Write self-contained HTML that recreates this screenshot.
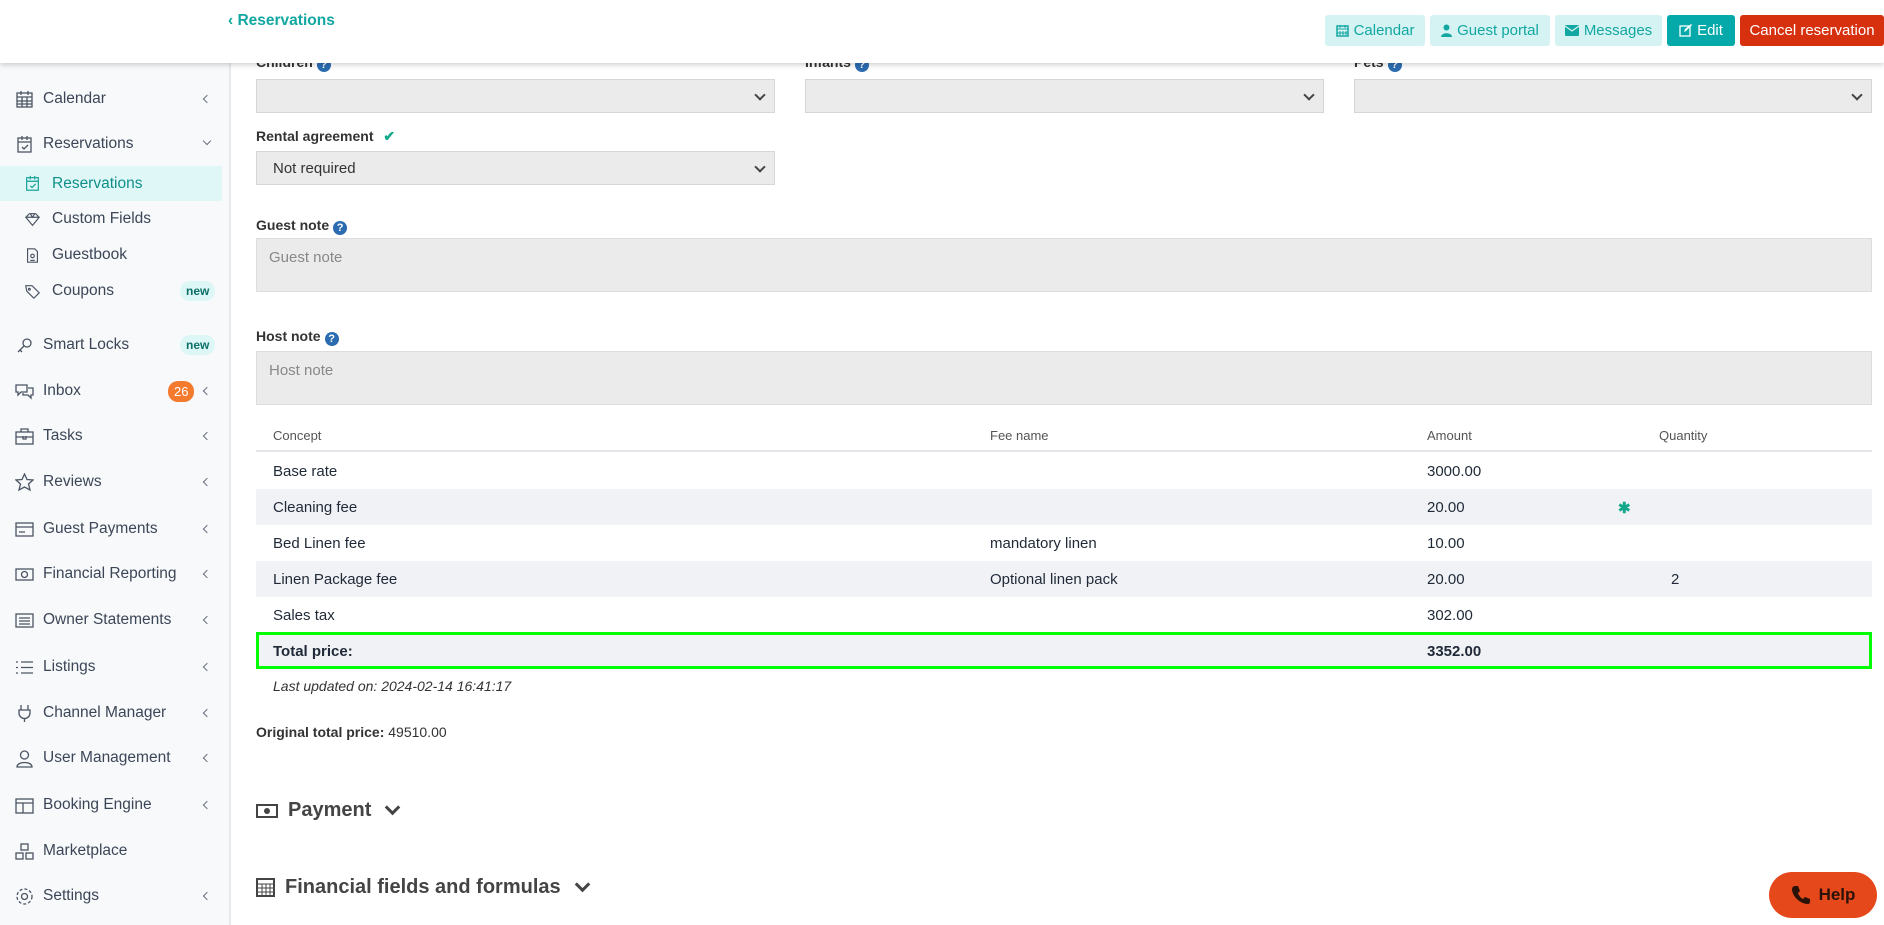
<!DOCTYPE html>
<html><head><meta charset="utf-8">
<style>
*{box-sizing:border-box;margin:0;padding:0}
body{width:1884px;height:925px;overflow:hidden;background:#fff;font-family:"Liberation Sans",sans-serif;position:relative;color:#222}
.abs{position:absolute}
#side{position:absolute;left:0;top:63px;width:231px;height:862px;background:#f7f9fb;border-right:2px solid #e6e9ee}
.it{position:absolute;left:0;width:222px;height:34px;display:flex;align-items:center;font-size:15.5px;color:#3c4657}
.it svg{position:absolute;left:15px;width:19px;height:19px;fill:none;stroke:#4b5563;stroke-width:1.3}
.it .t{position:absolute;left:43px}
.it.sub svg{left:24px;width:17px;height:17px}
.it.sub .t{left:52px}
.chev{position:absolute;left:204px;top:14px;width:6px;height:6px;border-left:1.3px solid #6b7280;border-bottom:1.3px solid #6b7280;transform:rotate(45deg)}
.chev.dn{transform:rotate(-45deg);top:11px}
.new{position:absolute;left:180px;background:#dcf7f5;color:#0e6f68;font-weight:bold;font-size:12px;border-radius:10px;padding:3px 6px}
#hdr{position:absolute;left:0;top:0;width:1884px;height:63px;background:#fff;box-shadow:0 2px 5px rgba(0,0,0,.18);z-index:5}
.btn{position:absolute;top:15px;height:31px;border-radius:3px;font-size:15px;display:flex;align-items:center;justify-content:center;gap:5px}
.lt{background:#d5f3f2;color:#13a7a2}
.lbl{position:absolute;font-size:14px;font-weight:bold;color:#333}
.q{display:inline-block;width:14px;height:14px;border-radius:50%;background:#2b6cb0;color:#fff;font-size:11px;text-align:center;line-height:14px;vertical-align:-1px;margin-left:4px}
.sel{position:absolute;height:34px;background:#ebebeb;border:1px solid #d6d6d6;font-size:15px;color:#333;padding:8px 16px}
.sel:after{content:"";position:absolute;right:10px;top:11px;width:6px;height:6px;border-right:2px solid #444;border-bottom:2px solid #444;transform:rotate(45deg)}
.ta{position:absolute;left:256px;width:1616px;height:54px;background:#ebebeb;border:1px solid #ddd;color:#888;font-size:15px;padding:10px 12px}
.row{position:absolute;left:256px;width:1616px;height:36px;font-size:15px;color:#1f2937}
.row span{position:absolute;top:10px}
.g{background:#f1f2f6}
.hc{display:inline-block;width:11px;height:11px;border-right:3.5px solid #444;border-bottom:3.5px solid #444;transform:rotate(45deg);margin:-6px 0 0 6px}
</style></head><body>
<div id="hdr">
 <div class="abs" style="left:228px;top:12px;color:#13a7a2;font-size:15.5px;font-weight:bold">&#x2039; Reservations</div>
 <div class="btn lt" style="left:1325px;width:100px"><svg width="13" height="13" viewBox="0 0 13 13"><rect x="1" y="2" width="11" height="10" fill="none" stroke="#13a7a2" stroke-width="1.5"/><path d="M1 5h11M4 1v3M9 1v3M4 7v4M7 7v4M10 7v4M1 9h11" stroke="#13a7a2"/></svg>Calendar</div>
 <div class="btn lt" style="left:1430px;width:120px"><svg width="11" height="13" viewBox="0 0 11 13"><circle cx="5.5" cy="3.5" r="3" fill="#13a7a2"/><path d="M0 13c0-5 11-5 11 0z" fill="#13a7a2"/></svg>Guest portal</div>
 <div class="btn lt" style="left:1555px;width:107px"><svg width="14" height="11" viewBox="0 0 14 11"><rect width="14" height="11" rx="1" fill="#13a7a2"/><path d="M0 1l7 5 7-5" stroke="#d5f3f2" fill="none" stroke-width="1.3"/></svg>Messages</div>
 <div class="btn" style="left:1667px;width:68px;background:#05a9a9;color:#fff"><svg width="13" height="13" viewBox="0 0 13 13"><rect x="1" y="2" width="10" height="10" fill="none" stroke="#fff" stroke-width="1.3"/><path d="M5 8l1-3 6-5 1 1-6 6z" fill="#fff"/></svg>Edit</div>
 <div class="btn" style="left:1740px;width:144px;background:#d7300f;color:#fff">Cancel reservation</div>
</div>

<div id="side">
 <div class="it" style="top:19px"><svg viewBox="0 0 19 19"><rect x="2" y="3" width="15" height="14"/><path d="M2 7h15M6 1v4M13 1v4M2 11h15M2 14h15M7 7v10M12 7v10"/></svg><span class="t">Calendar</span><span class="chev"></span></div>
 <div class="it" style="top:64px"><svg viewBox="0 0 19 19"><rect x="3" y="3" width="13" height="14"/><path d="M3 7h13M7 1v4M12 1v4M7 12l2 2 4-4"/></svg><span class="t">Reservations</span><span class="chev dn"></span></div>
 <div class="it sub" style="top:103px;height:35px;background:#dff7f7;color:#0f8f8a"><svg viewBox="0 0 19 19" style="stroke:#0f9f98"><rect x="3" y="3" width="13" height="14"/><path d="M3 7h13M7 1v4M12 1v4M7 12l2 2 4-4"/></svg><span class="t">Reservations</span></div>
 <div class="it sub" style="top:139px"><svg viewBox="0 0 19 19"><path d="M2 7l4-4h7l4 4-7.5 9z M2 7h15M7 3l2.5 4L12 3"/></svg><span class="t">Custom Fields</span></div>
 <div class="it sub" style="top:175px"><svg viewBox="0 0 19 19"><path d="M4 2h8l3 3v12H4z"/><circle cx="9.5" cy="10" r="2"/><path d="M7 15h5"/></svg><span class="t">Guestbook</span></div>
 <div class="it sub" style="top:211px"><svg viewBox="0 0 19 19"><path d="M2 3h7l8 8-6 6-8-8z"/><circle cx="6" cy="7" r="1"/></svg><span class="t">Coupons</span><span class="new">new</span></div>
 <div class="it" style="top:265px"><svg viewBox="0 0 19 19"><circle cx="12" cy="7" r="4"/><path d="M9 10l-6 6M5 14l2 2"/></svg><span class="t">Smart Locks</span><span class="new">new</span></div>
 <div class="it" style="top:311px"><svg viewBox="0 0 19 19"><path d="M1 3h11v7H6l-3 3v-3H1z M13 6h5v7h-2v3l-3-3H8v-2"/></svg><span class="t">Inbox</span><span class="abs" style="left:168px;background:#f47a2e;color:#fff;font-size:13px;border-radius:10px;padding:3px 6px">26</span><span class="chev"></span></div>
 <div class="it" style="top:356px"><svg viewBox="0 0 19 19"><rect x="1" y="5" width="17" height="12"/><path d="M6 5V2h7v3M1 10h17M8 9v3h3V9"/></svg><span class="t">Tasks</span><span class="chev"></span></div>
 <div class="it" style="top:402px"><svg viewBox="0 0 19 19"><path d="M9.5 1l2.5 5.5 6 .5-4.5 4 1.5 6-5.5-3-5.5 3 1.5-6-4.5-4 6-.5z"/></svg><span class="t">Reviews</span><span class="chev"></span></div>
 <div class="it" style="top:449px"><svg viewBox="0 0 19 19"><rect x="1" y="3" width="17" height="13"/><path d="M1 7h17M4 12h6"/></svg><span class="t">Guest Payments</span><span class="chev"></span></div>
 <div class="it" style="top:494px"><svg viewBox="0 0 19 19"><rect x="1" y="4" width="17" height="11"/><circle cx="9.5" cy="9.5" r="3"/></svg><span class="t">Financial Reporting</span><span class="chev"></span></div>
 <div class="it" style="top:540px"><svg viewBox="0 0 19 19"><rect x="1" y="3" width="17" height="13"/><path d="M4 7h11M4 10h11M4 13h11"/></svg><span class="t">Owner Statements</span><span class="chev"></span></div>
 <div class="it" style="top:587px"><svg viewBox="0 0 19 19"><path d="M6 4h12M6 9.5h12M6 15h12M1 4h2M1 9.5h2M1 15h2"/></svg><span class="t">Listings</span><span class="chev"></span></div>
 <div class="it" style="top:633px"><svg viewBox="0 0 19 19"><path d="M6 1v5M13 1v5M4 6h11v3a5.5 5.5 0 0 1-11 0zM9.5 14v4"/></svg><span class="t">Channel Manager</span><span class="chev"></span></div>
 <div class="it" style="top:678px"><svg viewBox="0 0 19 19"><circle cx="9.5" cy="6" r="4"/><path d="M2 18c0-6 15-6 15 0z"/></svg><span class="t">User Management</span><span class="chev"></span></div>
 <div class="it" style="top:725px"><svg viewBox="0 0 19 19"><rect x="1" y="3" width="17" height="14"/><path d="M1 7h17M8 7v10"/></svg><span class="t">Booking Engine</span><span class="chev"></span></div>
 <div class="it" style="top:771px"><svg viewBox="0 0 19 19"><rect x="6" y="2" width="7" height="6"/><rect x="1" y="11" width="7" height="6"/><rect x="11" y="11" width="7" height="6"/></svg><span class="t">Marketplace</span></div>
 <div class="it" style="top:816px"><svg viewBox="0 0 19 19"><circle cx="9.5" cy="9.5" r="3"/><circle cx="9.5" cy="9.5" r="7.5" stroke-dasharray="3 2"/></svg><span class="t">Settings</span><span class="chev"></span></div>
</div>

<div class="lbl" style="left:256px;top:54px">Children<span class="q">?</span></div>
<div class="lbl" style="left:805px;top:54px">Infants<span class="q">?</span></div>
<div class="lbl" style="left:1354px;top:54px">Pets<span class="q">?</span></div>
<div class="sel" style="left:256px;top:79px;width:519px"></div>
<div class="sel" style="left:805px;top:79px;width:519px"></div>
<div class="sel" style="left:1354px;top:79px;width:518px"></div>

<div class="lbl" style="left:256px;top:128px">Rental agreement <span style="color:#14a88a;margin-left:6px">&#10004;</span></div>
<div class="sel" style="left:256px;top:151px;width:519px">Not required</div>

<div class="lbl" style="left:256px;top:217px">Guest note<span class="q">?</span></div>
<div class="ta" style="top:238px">Guest note</div>
<div class="lbl" style="left:256px;top:328px">Host note<span class="q">?</span></div>
<div class="ta" style="top:351px">Host note</div>

<div class="row" style="top:424px;height:28px;border-bottom:2px solid #e3e5ea;font-size:13px;color:#555"><span style="left:17px;top:4px">Concept</span><span style="left:734px;top:4px">Fee name</span><span style="left:1171px;top:4px">Amount</span><span style="left:1403px;top:4px">Quantity</span></div>
<div class="row" style="top:453px"><span style="left:17px">Base rate</span><span style="left:1171px">3000.00</span></div>
<div class="row g" style="top:489px"><span style="left:17px">Cleaning fee</span><span style="left:1171px">20.00</span><span style="left:1362px;color:#14a88a;font-weight:bold">&#10033;</span></div>
<div class="row" style="top:525px"><span style="left:17px">Bed Linen fee</span><span style="left:734px">mandatory linen</span><span style="left:1171px">10.00</span></div>
<div class="row g" style="top:561px"><span style="left:17px">Linen Package fee</span><span style="left:734px">Optional linen pack</span><span style="left:1171px">20.00</span><span style="left:1415px">2</span></div>
<div class="row" style="top:597px"><span style="left:17px">Sales tax</span><span style="left:1171px">302.00</span></div>
<div class="row g" style="top:632px;height:37px;border:3px solid #0f0;font-weight:bold"><span style="left:14px;top:8px">Total price:</span><span style="left:1168px;top:8px">3352.00</span></div>

<div class="abs" style="left:273px;top:678px;font-size:14px;font-style:italic;color:#333">Last updated on: 2024-02-14 16:41:17</div>
<div class="abs" style="left:256px;top:724px;font-size:14px;color:#333"><b>Original total price:</b> 49510.00</div>

<div class="abs" style="left:256px;top:799px;font-size:20px;font-weight:bold;color:#444;display:flex;align-items:center;gap:10px"><svg width="22" height="14" viewBox="0 0 22 14"><rect x="1" y="1" width="20" height="12" fill="none" stroke="#444" stroke-width="2"/><circle cx="11" cy="7" r="3" fill="#444"/></svg>Payment <span class="hc"></span></div>
<div class="abs" style="left:256px;top:876px;font-size:20px;font-weight:bold;color:#444;display:flex;align-items:center;gap:10px"><svg width="19" height="19" viewBox="0 0 19 19"><rect x="1" y="1" width="17" height="17" fill="none" stroke="#444" stroke-width="2"/><path d="M1 6h17M6 6v12M10 6v12M14 6v12M1 10h17M1 14h17" stroke="#444"/></svg>Financial fields and formulas <span class="hc"></span></div>

<div class="abs" style="left:1769px;top:872px;width:108px;height:46px;border-radius:23px;background:#e5481a;color:#2a1208;font-weight:bold;font-size:17px;display:flex;align-items:center;justify-content:center;gap:8px"><svg width="20" height="20" viewBox="0 0 20 20"><path d="M4 1l3 0 2 5-2 2c1 3 3 5 5 6l2-2 5 2v3c0 1-1 2-2 2C9 19 1 11 1 4c0-1 1-3 3-3z" fill="#2a1208"/></svg>Help</div>
</body></html>
